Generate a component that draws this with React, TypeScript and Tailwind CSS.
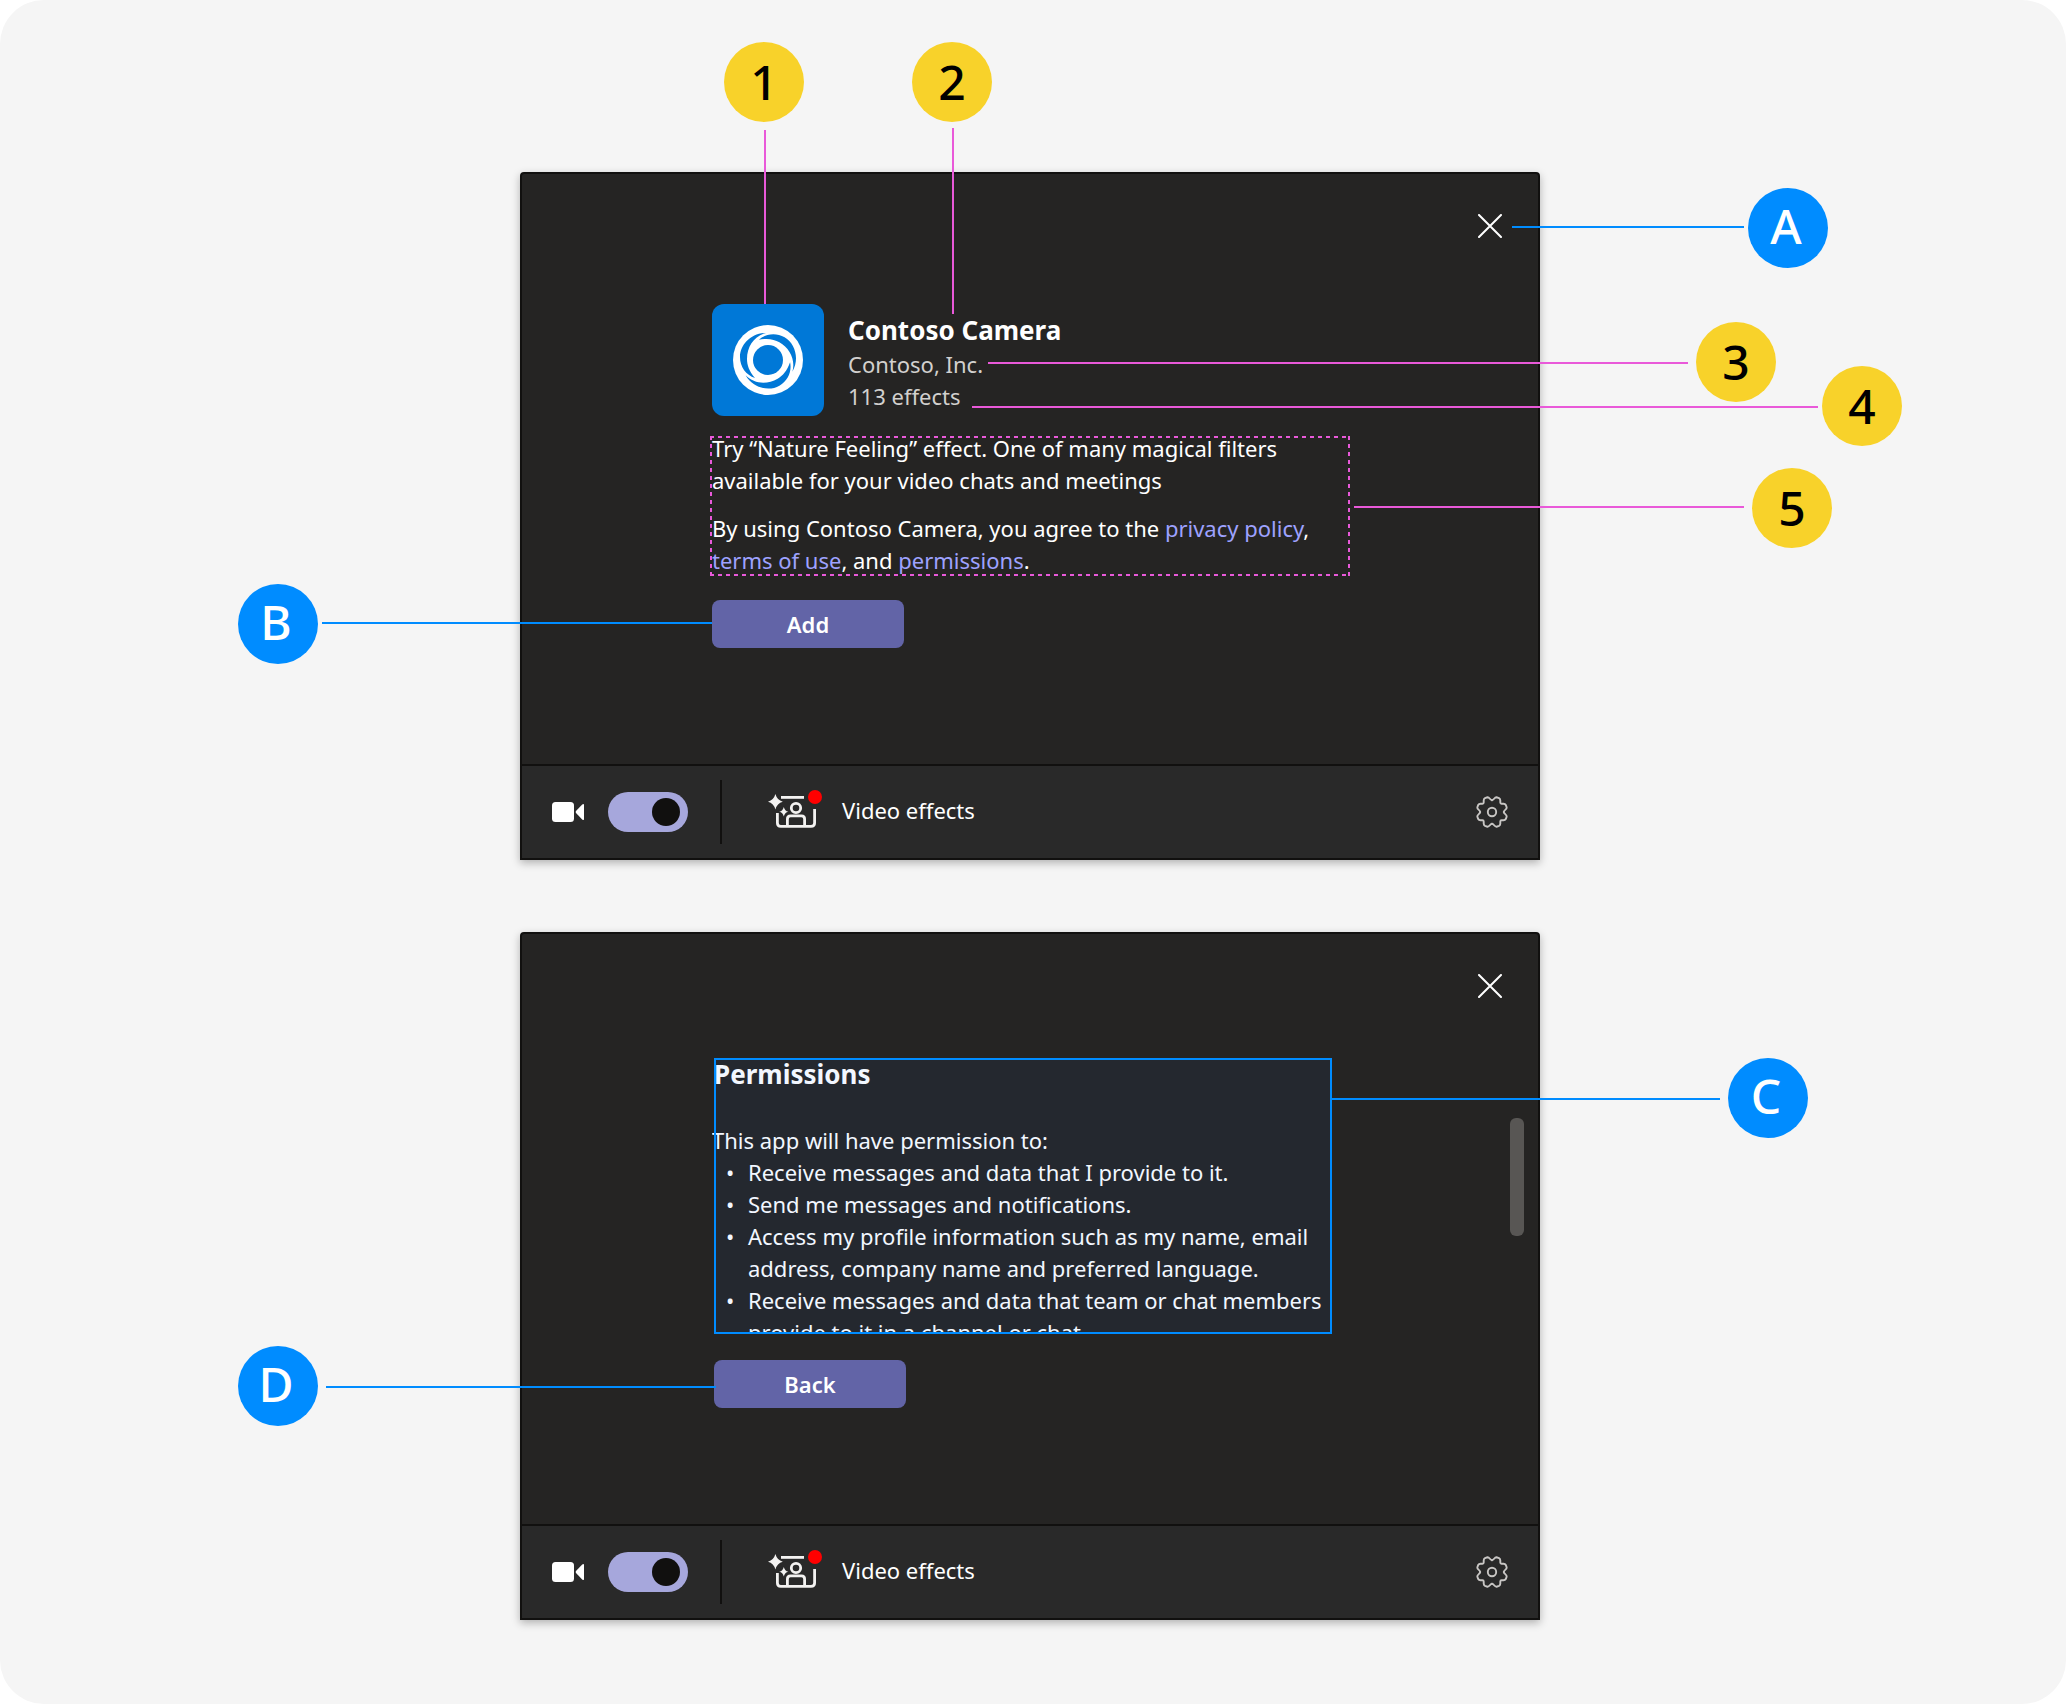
const BODY = "font-['Noto_Sans',sans-serif]";

function Badge({ label, tone, place }: { label: string; tone: "yellow" | "blue"; place: string }) {
  const color = tone === "yellow" ? "bg-[#f8d22a] text-black" : "bg-[#008cff] pr-1 pb-1 text-white";
  return (
    <div className={`absolute flex size-20 items-center justify-center rounded-full text-5xl leading-none font-medium ${color} ${place}`}>
      {label}
    </div>
  );
}

function Line({ tone, place }: { tone: "pink" | "blue"; place: string }) {
  return <div aria-hidden="true" className={`absolute ${tone === "pink" ? "bg-[#e959d9]" : "bg-[#008cff]"} ${place}`} />;
}

function CloseButton() {
  return (
    <button type="button" aria-label="Close" className="absolute top-9 right-8 p-1">
      <svg viewBox="0 0 24 24" className="size-6" fill="none" stroke="#fff" strokeWidth="2" strokeLinecap="round">
        <path d="M1 1 23 23M23 1 1 23" />
      </svg>
    </button>
  );
}

function CameraIcon() {
  return (
    <svg viewBox="0 0 32 20" className="h-5 w-8" fill="#fff" aria-hidden="true">
      <rect width="22" height="20" rx="3.5" />
      <path d="M24 9 30.2 2.6Q32 1 32 3V17Q32 19 30.2 17.4L24 11Q23.200 10 24 9Z" />
    </svg>
  );
}

function EffectsIcon() {
  return (
    <svg viewBox="0 0 56 40" className="h-10 w-14" fill="none" aria-hidden="true">
      <g stroke="#f3f2f1" strokeWidth="2.8">
        <path d="M13 7.400H36" />
        <path d="M9.400 23V33Q9.400 36.400 12.800 36.400H43Q46.600 36.400 46.600 33V19" />
        <circle cx="28" cy="18" r="4.700" />
        <path d="M19.400 36V29Q19.400 25.800 22.500 25.800H33.500Q36.600 25.800 36.600 29V36" />
      </g>
      <g fill="#f3f2f1">
        <path d="M7.400 4Q9 10 14.800 11.700Q9 13.400 7.400 19.400Q5.800 13.400 0 11.700Q5.800 10 7.400 4Z" />
        <path d="M15.800 17Q16.800 21 20.300 21.800Q16.800 22.600 15.800 26.600Q14.800 22.600 11.300 21.800Q14.800 21 15.800 17Z" />
      </g>
      <circle cx="47" cy="7" r="7" fill="#f00" />
    </svg>
  );
}

function GearIcon() {
  const quarter =
    "M16 4.200C18 4.200 18.400 1 20.600 1.300L23 2.200C24 2.700 24.300 3.400 24.300 4.500V6.500Q24.300 7.700 25.500 7.700H27.500C28.600 7.700 29.300 8 29.800 9L30.700 11.400C31 13.600 27.800 14 27.800 16";
  return (
    <svg viewBox="0 0 32 32" className="size-8" fill="none" stroke="#c8c6c4" strokeWidth="1.900" strokeLinecap="round" aria-hidden="true">
      <path d={quarter} />
      <path d={quarter} transform="rotate(90 16 16)" />
      <path d={quarter} transform="rotate(180 16 16)" />
      <path d={quarter} transform="rotate(270 16 16)" />
      <circle cx="16" cy="16" r="4.200" />
    </svg>
  );
}

function AppLogo() {
  const crescent = "M33 8C18 8 7 20 7 32C7 42 13 50 22 53C16 46 14 40 14 34C14 22 21 11 33 8Z";
  return (
    <div className="flex size-28 shrink-0 items-center justify-center rounded-xl bg-[#0078d7]">
      <svg viewBox="0 0 70 70" className="size-[70px]" aria-label="Contoso Camera logo" role="img">
        <circle cx="35" cy="35" r="35" fill="#fff" />
        <g fill="#0078d7">
          <circle cx="35" cy="35" r="15" />
          <path d={crescent} />
          <path d={crescent} transform="rotate(120 35 35)" />
          <path d={crescent} transform="rotate(240 35 35)" />
        </g>
      </svg>
    </div>
  );
}

function Footer() {
  return (
    <footer className="flex h-[94px] items-center border-t-2 border-[#11100f] bg-[#292929] px-[30px]">
      <CameraIcon />
      <label className="relative ml-6 block h-10 w-20">
        <input
          type="checkbox"
          role="switch"
          defaultChecked
          aria-label="Camera"
          className="block h-10 w-20 appearance-none rounded-full bg-[#a6a7dc]"
        />
        <span className="pointer-events-none absolute top-1.5 right-2 size-7 rounded-full bg-[#11100f]" />
      </label>
      <div className="ml-8 h-16 w-0.5 bg-[#11100f]" />
      <button type="button" className="ml-[46px] flex items-center gap-[18px] pb-1 text-white">
        <EffectsIcon />
        <span>Video effects</span>
      </button>
      <button type="button" aria-label="Settings" className="ml-auto">
        <GearIcon />
      </button>
    </footer>
  );
}

const panel =
  "relative flex min-h-[688px] flex-col rounded-t border-2 border-[#11100f] bg-[#252423] shadow-[0_3px_8px_rgba(0,0,0,0.28)]";
const action = "block h-12 w-48 rounded-lg bg-[#6264a7] font-semibold text-white";
const link = "text-[#9ea2ff]";

const permissions = [
  ["Receive messages and data that I provide to it."],
  ["Send me messages and notifications."],
  ["Access my profile information such as my name, email", "address, company name and preferred language."],
  ["Receive messages and data that team or chat members", "provide to it in a channel or chat."],
];

export default function App() {
  return (
    <div className="min-h-screen bg-white">
      <main className={`min-h-screen overflow-hidden rounded-[44px] bg-[#f5f5f5] pt-[172px] pr-3 pb-[84px] pl-1.5 text-[22px] leading-8 text-white ${BODY}`}>
        <div className="mx-auto flex w-full max-w-[1020px] flex-col gap-[72px]">
          <section className="relative" aria-label="App details">
            <div className={panel}>
              <CloseButton />
              <div className="flex-1 pt-[130px] pl-[190px]">
                <header className="flex gap-6">
                  <AppLogo />
                  <div className="pt-2 text-[#d2d0ce]">
                    <h1 className="text-[26px] leading-9 font-bold text-white">Contoso Camera</h1>
                    <p>Contoso, Inc.</p>
                    <p>113 effects</p>
                  </div>
                </header>
                <div className="mt-4 max-w-[640px] space-y-4">
                  <p>
                    Try “Nature Feeling” effect. One of many magical filters
                    <br />
                    available for your video chats and meetings
                  </p>
                  <p>
                    By using Contoso Camera, you agree to the <a href="#privacy" className={link}>privacy policy</a>,
                    <br />
                    <a href="#terms" className={link}>terms of use</a>, and <a href="#permissions" className={link}>permissions</a>.
                  </p>
                </div>
                <button type="button" className={`mt-6 ${action}`}>Add</button>
              </div>
              <Footer />
            </div>

            <svg className="absolute top-[264px] left-[190px] h-[140px] w-[640px]" viewBox="0 0 640 140" fill="none" stroke="#e959d9" strokeWidth="2" strokeDasharray="4 4" aria-hidden="true">
              <path d="M0 1H640M0 139H640M1 0V140M639 0V140" />
            </svg>
            <Line tone="pink" place="-top-[42px] left-[244px] h-[174px] w-0.5" />
            <Line tone="pink" place="-top-[44px] left-[432px] h-[186px] w-0.5" />
            <Line tone="pink" place="top-[190px] left-[468px] h-0.5 w-[700px]" />
            <Line tone="pink" place="top-[234px] left-[452px] h-0.5 w-[846px]" />
            <Line tone="pink" place="top-[334px] left-[834px] h-0.5 w-[390px]" />
            <Line tone="blue" place="top-[54px] left-[992px] h-0.5 w-[232px]" />
            <Line tone="blue" place="top-[450px] -left-[198px] h-0.5 w-[390px]" />
            <Badge label="1" tone="yellow" place="-top-[130px] left-[204px]" />
            <Badge label="2" tone="yellow" place="-top-[130px] left-[392px]" />
            <Badge label="3" tone="yellow" place="top-[150px] left-[1176px]" />
            <Badge label="4" tone="yellow" place="top-[194px] left-[1302px]" />
            <Badge label="5" tone="yellow" place="top-[296px] left-[1232px]" />
            <Badge label="A" tone="blue" place="top-4 left-[1228px]" />
            <Badge label="B" tone="blue" place="top-[412px] -left-[282px]" />
          </section>

          <section className="relative" aria-label="App permissions">
            <div className={panel}>
              <CloseButton />
              <div className="absolute top-[184px] right-3.5 h-[118px] w-3.5 rounded-md bg-[#585654]" />
              <div className="flex-1 pt-[122px] pl-[190px]">
                <div tabIndex={0} className="h-[278px] max-w-[624px] overflow-y-auto [scrollbar-width:none]">
                  <h2 className="pl-0.5 text-[26px] leading-9 font-bold">Permissions</h2>
                  <p className="mt-8">This app will have permission to:</p>
                  <ul className="list-none">
                    {permissions.map((lines) => (
                      <li key={lines[0]} className="flex pl-3.5 whitespace-nowrap">
                        <span className="w-[22px] shrink-0">•</span>
                        <span>
                          {lines.map((line) => (
                            <span key={line} className="block">{line}</span>
                          ))}
                        </span>
                      </li>
                    ))}
                  </ul>
                </div>
                <button type="button" className={`mt-[26px] ml-0.5 ${action}`}>Back</button>
              </div>
              <Footer />
            </div>

            <div className="pointer-events-none absolute top-[126px] left-[194px] h-[276px] w-[618px] border-2 border-[#008cff] bg-[#1e78ff]/6" />
            <Line tone="blue" place="top-[166px] left-[812px] h-0.5 w-[388px]" />
            <Line tone="blue" place="top-[454px] -left-[194px] h-0.5 w-[390px]" />
            <Badge label="C" tone="blue" place="top-[126px] left-[1208px]" />
            <Badge label="D" tone="blue" place="top-[414px] -left-[282px]" />
          </section>
        </div>
      </main>
    </div>
  );
}
